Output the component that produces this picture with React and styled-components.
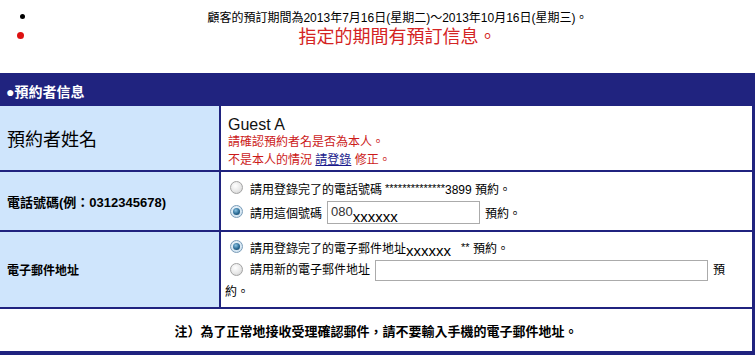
import React from 'react';
import styled, { createGlobalStyle, css } from 'styled-components';

const navy = '#20237f';
const labelBg = '#cfe5fc';
const red = '#cc1a1a';

const GlobalStyle = createGlobalStyle`
  body {
    margin: 0;
    background: #fff;
    color: #000;
    font-family: "Liberation Sans", "Noto Sans CJK TC", sans-serif;
  }
`;

const Notices = styled.ul`
  list-style: none;
  margin: 0;
  padding: 8px 0 0;
  height: 73px;
  box-sizing: border-box;
`;

const NoticeItem = styled.li`
  display: flex;
  align-items: center;
  height: ${p => p.$height}px;
  font-size: ${p => p.$size}px;
  color: ${p => p.$color};
`;

const Dot = styled.span`
  flex: none;
  width: ${p => p.$size}px;
  height: ${p => p.$size}px;
  border-radius: 50%;
  background: ${p => p.$color};
  margin-left: ${p => p.$left}px;
  margin-right: ${p => 40 - p.$left - p.$size}px;
`;

const NoticeText = styled.span`
  flex: 1;
  text-align: center;
`;

const Panel = styled.section`
  display: grid;
  grid-template-columns: 219px 1fr;
  grid-template-rows: 31px 64px 58px 75px 42px;
  gap: 2px;
  padding: 0 3px 4px 0;
  background: ${navy};
`;

const PanelTitle = styled.h2`
  grid-column: 1 / -1;
  margin: 0;
  padding: 5px 0 0 6px;
  display: flex;
  align-items: center;
  color: #fff;
  font-size: 14px;
  font-weight: bold;
`;

const Label = styled.div`
  display: flex;
  align-items: center;
  padding-left: 7px;
  background: ${labelBg};
  font-size: ${p => p.$size}px;
  font-weight: ${p => (p.$bold ? 'bold' : 'normal')};
`;

const Cell = styled.div`
  background: #fff;
  font-size: 12px;
  padding: ${p => p.$pad};
`;

const GuestName = styled.div`
  font-size: 16px;
  line-height: 15px;
  color: #111;
`;

const Warn = styled.p`
  margin: ${p => p.$top}px 0 0;
  font-size: 12px;
  line-height: 14px;
  color: ${red};
`;

const Link = styled.a`
  color: #1a1a8c;
  text-decoration: underline;
`;

const Option = styled.div`
  display: flex;
  align-items: center;
  height: 24px;
  white-space: nowrap;
`;

const FlowOption = styled.div`
  line-height: 22px;
`;

const Radio = styled.input.attrs({ type: 'radio' })`
  appearance: none;
  flex: none;
  display: inline-block;
  vertical-align: middle;
  position: relative;
  width: 13px;
  height: 13px;
  margin: -2px 7px 0 5px;
  box-sizing: border-box;
  border-radius: 50%;
  border: 1px solid #a3a3a3;
  background: radial-gradient(circle at 40% 35%, #fff 0%, #e8e8e8 55%, #c9c9c9 100%);

  ${p =>
    p.defaultChecked &&
    css`
      border-color: #7a9cb8;
      background: radial-gradient(circle at 40% 35%, #eef6fc 0%, #c6dcec 100%);
      &::after {
        content: '';
        position: absolute;
        inset: 2px;
        border-radius: 50%;
        background: radial-gradient(circle at 40% 35%, #8cc4e4 0%, #2a6a94 55%, #163c5c 100%);
      }
    `}
`;

const FieldBox = styled.div`
  display: flex;
  align-items: flex-start;
  width: 153px;
  height: 23px;
  box-sizing: border-box;
  margin: 0 5px;
  padding: 3px 0 0 3px;
  border: 1px solid #ababab;
  font-size: 13px;
  line-height: 14px;
  color: #333;
`;

const TextField = styled.input`
  width: 333px;
  height: 21px;
  box-sizing: border-box;
  margin: 0 5px;
  vertical-align: middle;
  border: 1px solid #ababab;
  background: #fff;
  font: inherit;
`;

const Masked = styled.span`
  position: relative;
  top: ${p => p.$drop}px;
  font-family: "Liberation Sans", Arial, sans-serif;
  font-size: 15px;
  line-height: 14px;
  color: #000;
`;

const Stars = styled.span`
  margin-left: ${p => p.$left}px;
  font-size: 11px;
`;

const Note = styled.div`
  grid-column: 1 / -1;
  display: flex;
  align-items: center;
  justify-content: center;
  background: #fff;
  font-size: 13px;
  font-weight: bold;
`;

export default function App() {
  return (
    <>
      <GlobalStyle />
      <Notices>
        <NoticeItem $height={16} $size={12} $color="#000">
          <Dot $size={5} $left={20} $color="#000" />
          <NoticeText>顧客的預訂期間為2013年7月16日(星期二)～2013年10月16日(星期三)。</NoticeText>
        </NoticeItem>
        <NoticeItem $height={22} $size={18} $color="#d42424">
          <Dot $size={7} $left={17} $color="#dd1111" />
          <NoticeText>指定的期間有預訂信息。</NoticeText>
        </NoticeItem>
      </Notices>

      <Panel>
        <PanelTitle>●預約者信息</PanelTitle>

        <Label $size={18}>預約者姓名</Label>
        <Cell $pad="11px 0 0 7px">
          <GuestName>Guest A</GuestName>
          <Warn $top={3}>請確認預約者名是否為本人。</Warn>
          <Warn $top={4}>
            不是本人的情況 <Link href="#">請登錄</Link> 修正。
          </Warn>
        </Cell>

        <Label $size={13} $bold>電話號碼(例：0312345678)</Label>
        <Cell $pad="4px 0 0 4px">
          <Option>
            <Radio name="tel" />
            請用登錄完了的電話號碼 <Stars $left={3}>**************</Stars>3899 預約。
          </Option>
          <Option>
            <Radio name="tel" defaultChecked />
            請用這個號碼
            <FieldBox>
              080<Masked $drop={5}>xxxxxx</Masked>
            </FieldBox>
            預約。
          </Option>
        </Cell>

        <Label $size={12} $bold>電子郵件地址</Label>
        <Cell $pad="3px 20px 0 4px">
          <Option>
            <Radio name="mail" defaultChecked />
            請用登錄完了的電子郵件地址<Masked $drop={4}>xxxxxx</Masked>
            <Stars $left={10}>**</Stars>&nbsp;預約。
          </Option>
          <FlowOption>
            <Radio name="mail" />
            請用新的電子郵件地址<TextField type="text" />預約。
          </FlowOption>
        </Cell>

        <Note>注）為了正常地接收受理確認郵件，請不要輸入手機的電子郵件地址。</Note>
      </Panel>
    </>
  );
}
